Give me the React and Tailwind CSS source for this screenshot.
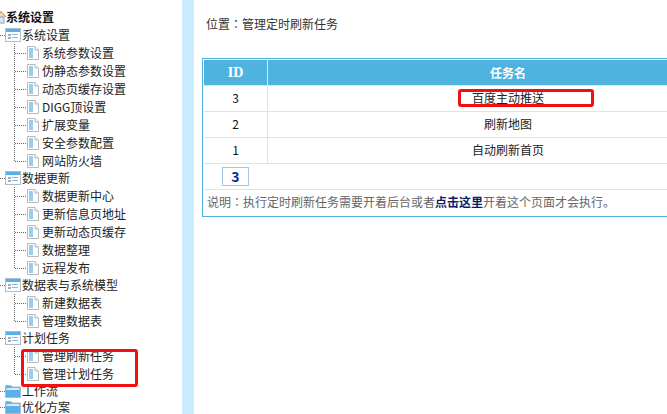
const F = '"Noto Sans CJK SC","Liberation Sans",sans-serif';

function Doc() {
  return (
    <svg width="15" height="16" viewBox="0 0 15 16" className="shrink-0">
      <path d="M1.5 1.5H9L12.5 5V14.5H1.5Z" fill="#fff" stroke="#b9b9b9" />
      <path d="M9 1.5V5H12.5" fill="#eee" stroke="#b9b9b9" />
      <rect x="3" y="3" width="4" height="10" fill="#9accef" />
    </svg>
  );
}
function Win() {
  return (
    <svg width="16" height="16" viewBox="0 0 16 16" className="shrink-0">
      <rect x="0.5" y="1.5" width="15" height="13" fill="#fff" stroke="#b0bcc8" />
      <rect x="1" y="2" width="14" height="3" fill="#5caee6" />
      <rect x="3" y="7" width="3" height="2" fill="#8fb8d8" />
      <rect x="7" y="7" width="6" height="1" fill="#8fb8d8" />
      <rect x="3" y="10" width="3" height="2" fill="#8fb8d8" />
      <rect x="7" y="10" width="6" height="1" fill="#8fb8d8" />
    </svg>
  );
}
function Folder() {
  return (
    <svg width="16" height="16" viewBox="0 0 16 16" className="shrink-0">
      <path d="M0.5 14.5V2.5H6L7 4H15.5V14.5Z" fill="#5cb0ea" stroke="#a9bccb" />
      <rect x="1.5" y="5" width="13" height="2" fill="#d4ecfb" />
    </svg>
  );
}
function Home() {
  return (
    <svg width="6" height="16" viewBox="0 0 6 16" className="shrink-0">
      <path d="M-4 8L1 2.5L6 8" fill="#f3d9b5" stroke="#c0784a" />
      <rect x="-2" y="8" width="6" height="6" fill="#dbe6f2" stroke="#8aa0bb" />
    </svg>
  );
}

const tree = [
  { t: "系统设置", k: "win", items: ["系统参数设置", "伪静态参数设置", "动态页缓存设置", "DIGG顶设置", "扩展变量", "安全参数配置", "网站防火墙"] },
  { t: "数据更新", k: "win", items: ["数据更新中心", "更新信息页地址", "更新动态页缓存", "数据整理", "远程发布"] },
  { t: "数据表与系统模型", k: "win", items: ["新建数据表", "管理数据表"] },
  { t: "计划任务", k: "win", items: ["管理刷新任务", "管理计划任务"] },
  { t: "工作流", k: "folder", items: [] },
  { t: "优化方案", k: "folder", items: [] },
];

function Sidebar() {
  return (
    <aside className="w-[182px] shrink-0 bg-white pt-[8px] overflow-hidden relative">
      <div className="flex items-center h-[18px] text-[12px] font-bold text-[#111]">
        <Home />
        <span>系统设置</span>
      </div>
      {tree.map((g) => (
        <div key={g.t} className={g.k === "win" ? "-mb-px" : "-mb-[2px]"}>
          <div className="flex items-center h-[18px] pl-[5px] text-[12px] leading-[18px] text-[#222] gap-[1px] relative">
            <span className="absolute left-0 top-[9px] w-[5px] border-t border-dotted border-[#666]" />
            {g.k === "win" ? <Win /> : <Folder />}
            <span>{g.t}</span>
          </div>
          <div className="relative">
            {g.items.length > 0 && (
              <span className="absolute left-[14px] top-0 bottom-[9px] border-l border-dotted border-[#666]" />
            )}
            {g.items.map((it) => (
              <div key={it} className="flex items-center h-[18px] pl-[26px] text-[12px] leading-[18px] text-[#222] gap-[1px] relative">
                <span className="absolute left-[15px] top-[9px] w-[11px] border-t border-dotted border-[#666]" />
                <Doc />
                <span>{it}</span>
              </div>
            ))}
          </div>
        </div>
      ))}
      <div className="absolute left-[21px] top-[349px] w-[117px] h-[38px] border-[3px] border-[#f01010] rounded-[3px]" />
    </aside>
  );
}

function Row({ id, name, mark }) {
  return (
    <div className="flex h-[26px] border-b border-[#c9ecf7]">
      <div className="w-[64px] shrink-0 flex items-center justify-center border-r border-[#c9ecf7] pb-[2px] text-[12px] text-[#111]">{id}</div>
      <div className="flex-1 flex items-center justify-center pb-[2px] text-[12px] text-[#222] relative">
        <span>{name}</span>
        {mark && <span className="absolute left-[190px] top-[3px] w-[136px] h-[18px] border-[3px] border-[#f01010] rounded-[3px]" />}
      </div>
    </div>
  );
}

const Colon = () => <span style={{ fontFamily: '"Noto Sans CJK TC",sans-serif' }}>：</span>;

export default function App() {
  return (
    <div className="flex w-[667px] h-[414px] overflow-hidden bg-white" style={{ fontFamily: F }}>
      <Sidebar />
      <div className="w-[12px] shrink-0 bg-[#c9ecfd]" />
      <main className="flex-1 min-w-0">
        <div className="pl-[12px] pt-[15px] h-[58px] text-[12px] leading-[18px] text-[#333]">位置<Colon />管理定时刷新任务</div>
        <div className="ml-[8px] w-[548px] border border-[#4fb3df] p-[1px]">
          <div className="flex h-[26px] bg-[#4fb3df] text-white text-[12px] font-bold border-b border-[#c9ecf7]">
            <div className="w-[64px] shrink-0 flex items-center justify-center border-r border-[#c9ecf7] text-[14px]" style={{ fontFamily: '"Liberation Serif",serif' }}>ID</div>
            <div className="flex-1 flex items-center justify-center">任务名</div>
          </div>
          <Row id="3" name="百度主动推送" mark />
          <Row id="2" name="刷新地图" />
          <Row id="1" name="自动刷新首页" />
          <div className="flex items-center h-[26px] border-b border-[#c9ecf7] pl-[18px]">
            <span className="w-[27px] h-[19px] flex items-center justify-center border border-[#a9c4e0] text-[14px] font-bold text-[#0a2f8f]">3</span>
          </div>
          <div className="h-[25px] pl-[3px] pb-[1px] flex items-center text-[12px] text-[#666]">
            说明<Colon />执行定时刷新任务需要开着后台或者<b className="text-[#0b1f66]">点击这里</b>开着这个页面才会执行。
          </div>
        </div>
      </main>
    </div>
  );
}
